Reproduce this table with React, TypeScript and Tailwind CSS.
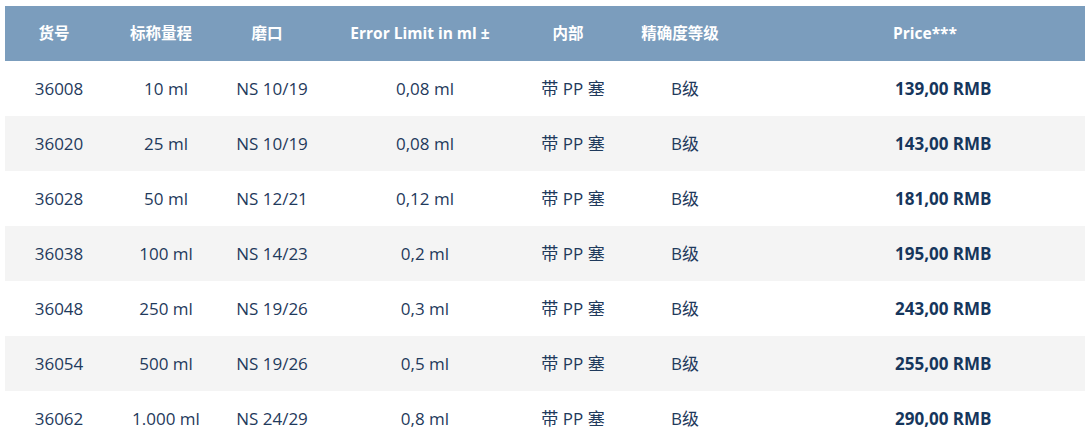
import React from "react";

const rows = [
  ["36008", "10 ml", "NS 10/19", "0,08 ml", "139,00 RMB"],
  ["36020", "25 ml", "NS 10/19", "0,08 ml", "143,00 RMB"],
  ["36028", "50 ml", "NS 12/21", "0,12 ml", "181,00 RMB"],
  ["36038", "100 ml", "NS 14/23", "0,2 ml", "195,00 RMB"],
  ["36048", "250 ml", "NS 19/26", "0,3 ml", "243,00 RMB"],
  ["36054", "500 ml", "NS 19/26", "0,5 ml", "255,00 RMB"],
  ["36062", "1.000 ml", "NS 24/29", "0,8 ml", "290,00 RMB"],
];

const cols = "grid grid-cols-[108px_106px_106px_200px_96px_128px_1fr]";

export default function App() {
  return (
    <div
      className="w-[1085px] h-[446px] bg-white pl-[5px] pt-[6px] overflow-hidden"
      style={{ fontFamily: '"Open Sans", "Noto Sans CJK SC", sans-serif' }}
    >
      <div className="w-[1080px]">
        <div className={`${cols} h-[55px] items-center bg-[#7b9dbd] text-white font-bold text-[15.5px]`}>
          <div className="text-center pr-[10px]">货号</div>
          <div className="text-center pr-[10px]">标称量程</div>
          <div className="text-center pr-[10px]">磨口</div>
          <div className="text-center pr-[10px]">Error Limit in ml ±</div>
          <div className="text-center pr-[10px]">内部</div>
          <div className="text-center pr-[10px]">精确度等级</div>
          <div className="pl-[144px]">Price***</div>
        </div>
        {rows.map((r, i) => (
          <div
            key={r[0]}
            className={`${cols} h-[55px] items-center text-[17px] text-[#1f3a5c] ${i % 2 === 1 ? "bg-[#f4f4f4]" : "bg-white"}`}
          >
            <div className="text-center">{r[0]}</div>
            <div className="text-center">{r[1]}</div>
            <div className="text-center">{r[2]}</div>
            <div className="text-center">{r[3]}</div>
            <div className="text-center">带 PP 塞</div>
            <div className="text-center">B级</div>
            <div className="pl-[146px] font-bold text-[#16365c]">{r[4]}</div>
          </div>
        ))}
      </div>
    </div>
  );
}
